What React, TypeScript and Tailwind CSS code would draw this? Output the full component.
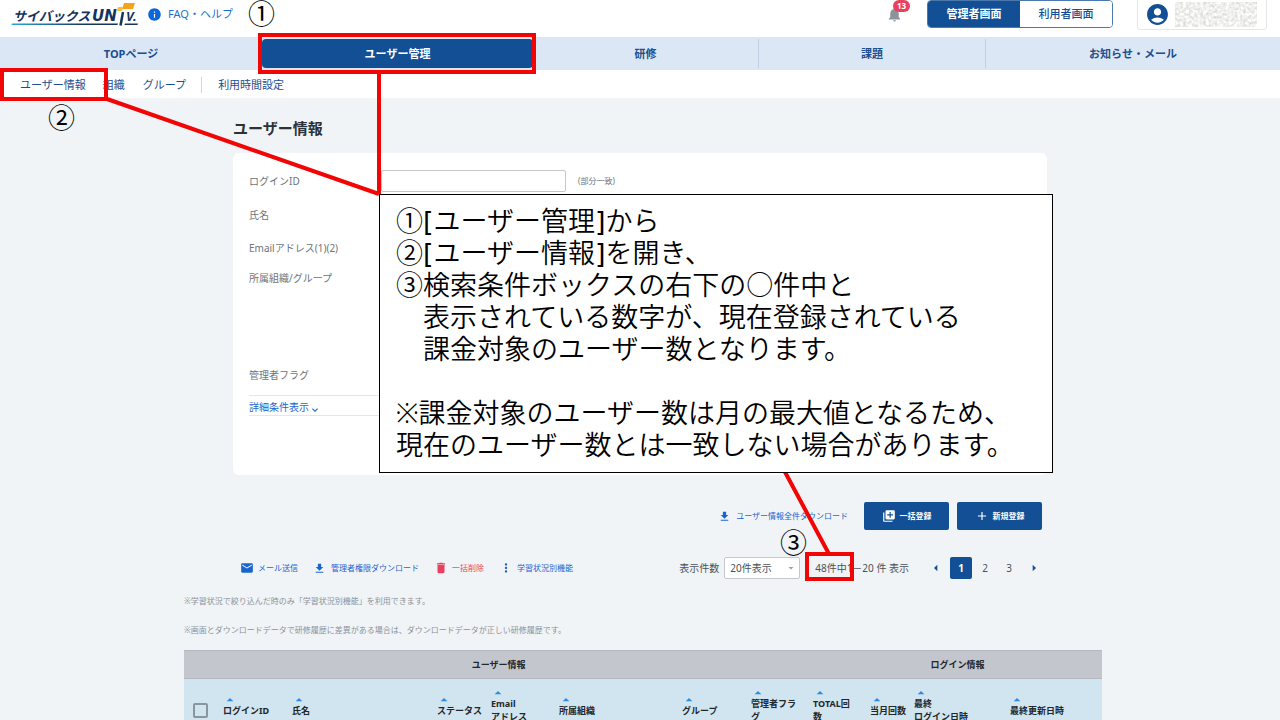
import React from "react";
import {
  MdAccountCircle,
  MdAdd,
  MdArrowDropDown,
  MdArrowDropUp,
  MdArrowLeft,
  MdArrowRight,
  MdDelete,
  MdDownload,
  MdExpandMore,
  MdInfo,
  MdLibraryAdd,
  MdMail,
  MdMoreVert,
  MdNotifications,
} from "react-icons/md";

const navItems = ["TOPページ", "ユーザー管理", "研修", "課題", "お知らせ・メール"];

const columns = [
  { label: "ログインID", width: "w-[69px]" },
  { label: "氏名", width: "w-[145px]" },
  { label: "ステータス", width: "w-[54px]" },
  { label: "Email\nアドレス", width: "w-[68px]" },
  { label: "所属組織", width: "w-[123px]" },
  { label: "グループ", width: "w-[69px]" },
  { label: "管理者フラ\nグ", width: "w-[62px]" },
  { label: "TOTAL回\n数", width: "w-[57px]" },
  { label: "当月回数", width: "w-[44px]" },
  { label: "最終\nログイン日時", width: "w-[96px]" },
  { label: "最終更新日時", width: "w-[92px]" },
];

function Logo() {
  return (
    <svg width="128" height="28" viewBox="0 0 128 28" role="img" aria-label="サイバックスUNiV.">
      <defs>
        <linearGradient id="logo-line" x1="0" x2="1" y1="0" y2="0">
          <stop offset="0" stopColor="#2aa5e0" />
          <stop offset="0.7" stopColor="#17325f" />
        </linearGradient>
      </defs>
      <path d="M1 23.5H107L106.5 25H0.5Z" fill="url(#logo-line)" />
      <path d="M114 23.5H127L126.5 25H113.5Z" fill="#17325f" />
      <g fontWeight="700" fontStyle="italic" fill="#17325f">
        <text x="2" y="21" fontSize="13">サイバックス</text>
        <text x="81" y="21" fontSize="15" fontFamily="DejaVu Sans, sans-serif">UN</text>
        <text x="115" y="21" fontSize="13">V.</text>
      </g>
      <path d="M112 12L109.5 25.5" stroke="#17325f" strokeWidth="2.5" />
      <path d="M113 3H124L122 9H111Z" fill="#f6a21b" />
      <path d="M107 7H112L111 11H106Z" fill="#f8bd3a" />
    </svg>
  );
}

function Header() {
  return (
    <header className="flex h-[37px] items-start justify-between bg-white">
      <div className="flex items-center pl-[11px]">
        <Logo />
        <a href="#faq" className="ml-2 flex items-center gap-1.5 text-[11px] text-[#1a6fd6]">
          <MdInfo className="size-[15px] text-[#0d66d8]" />
          FAQ・ヘルプ
        </a>
      </div>

      <div className="flex items-start pr-[13px]">
        <button type="button" aria-label="お知らせ" className="relative mt-1.5 mr-6">
          <MdNotifications className="size-[17px] text-[#8d939a]" />
          <span className="absolute -top-1.5 left-[7px] flex h-3 w-[17px] items-center justify-center rounded-full bg-[#e9405f] text-[8px] font-bold text-white">
            13
          </span>
        </button>
        <div className="mr-6 flex h-7 w-[186px] overflow-hidden rounded-sm border border-[#4b78ad] text-[11px]">
          <button type="button" className="flex-1 bg-[#134f94] font-bold text-white">
            管理者画面
          </button>
          <button type="button" className="flex-1 bg-white font-medium text-[#134f94]">
            利用者画面
          </button>
        </div>
        <button
          type="button"
          aria-label="アカウント"
          className="flex h-[30px] w-[130px] items-center gap-[5px] rounded-b border border-t-0 border-gray-200 pl-[7px]"
        >
          <MdAccountCircle className="size-[25px] text-[#134f94]" />
          <svg className="h-[25px] w-[82px]">
            <filter id="mosaic">
              <feTurbulence type="fractalNoise" baseFrequency="0.35" numOctaves="2" seed="4" />
              <feColorMatrix values="0.6 0 0 0 0.57 0.6 0 0 0 0.57 0.6 0 0 0 0.56 0 0 0 0 1" />
            </filter>
            <rect width="82" height="25" filter="url(#mosaic)" />
          </svg>
        </button>
      </div>
    </header>
  );
}

function Navigation() {
  return (
    <>
      <nav className="grid h-[33px] grid-cols-[262fr_271fr_226fr_227fr_294fr] bg-[#dce7f5] py-0.5 text-[11px] font-bold text-[#1b4f8f]">
        {navItems.map((item, i) => (
          <a
            key={item}
            href="#nav"
            className={
              i === 1
                ? "flex items-center justify-center rounded-sm bg-[#134f94] pt-0.5 text-white"
                : i === 2 || i === 3
                  ? "flex items-center justify-center border-r border-[#c0cfe2] pt-0.5"
                  : "flex items-center justify-center pt-0.5"
            }
          >
            {item}
          </a>
        ))}
      </nav>
      <nav className="flex h-[29px] items-center border-b border-gray-100 bg-white pt-0.5 pl-5 text-[11px] text-[#1b4f8f]">
        <a href="#users" className="mr-[17px]">ユーザー情報</a>
        <a href="#org" className="mr-[18px]">組織</a>
        <a href="#group" className="mr-[15px]">グループ</a>
        <a href="#time" className="border-l border-gray-300 pl-4">利用時間設定</a>
      </nav>
    </>
  );
}

function SearchForm() {
  return (
    <form className="mt-[15px] h-[322px] rounded-md bg-white px-4 pt-[17px] text-[10px] text-[#6d747c]">
      <div className="flex h-[22px] items-center">
        <label htmlFor="login-id" className="w-[132px]">ログインID</label>
        <input id="login-id" className="h-[22px] w-[185px] rounded-xs border border-[#c4c7cc] bg-white px-2" />
        <span className="ml-3 text-[8px]">(部分一致)</span>
      </div>
      <div className="mt-3 flex h-[22px] items-center">氏名</div>
      <div className="mt-[11px] flex h-[22px] items-center">Emailアドレス(1)(2)</div>
      <div className="mt-2 flex h-[22px] items-center">所属組織/グループ</div>
      <div className="mt-[75px] flex h-[22px] items-center">管理者フラグ</div>
      <div className="mt-[9px] flex h-[21px] items-center border-y border-[#e4e6e9]">
        <button type="button" className="flex items-center pt-1 text-[#1a64cf]">
          詳細条件表示
          <MdExpandMore className="mt-1 size-3" />
        </button>
      </div>
    </form>
  );
}

function UserActions() {
  return (
    <div className="mr-[5px] mt-[27px] flex h-7 items-center justify-end text-[8px]">
      <a href="#download" className="mr-4 flex items-center gap-[5px] text-[#1a64cf]">
        <MdDownload className="size-[13px]" />
        ユーザー情報全件ダウンロード
      </a>
      <button
        type="button"
        className="mr-2 flex h-7 w-[85px] items-center justify-center gap-1 rounded-xs bg-[#134f94] font-bold text-white"
      >
        <MdLibraryAdd className="size-[14px]" />
        一括登録
      </button>
      <button
        type="button"
        className="flex h-7 w-[85px] items-center justify-center gap-1 rounded-xs bg-[#134f94] font-bold text-white"
      >
        <MdAdd className="size-[14px]" />
        新規登録
      </button>
    </div>
  );
}

function ListToolbar() {
  return (
    <div className="mt-[26px] ml-[7px] flex h-6 items-center text-[8px] text-[#1a64cf]">
      <button type="button" className="mr-[15px] flex items-center gap-1">
        <MdMail className="size-[14px]" />
        メール送信
      </button>
      <button type="button" className="mr-[15px] flex items-center gap-[5px]">
        <MdDownload className="size-[13px]" />
        管理者権限ダウンロード
      </button>
      <button type="button" className="mr-[15px] flex items-center gap-1 text-[#e9405f]">
        <MdDelete className="size-[14px]" />
        一括削除
      </button>
      <button type="button" className="flex items-center gap-1">
        <MdMoreVert className="size-[14px]" />
        学習状況別機能
      </button>

      <div className="mr-[5px] ml-auto flex items-center text-[10px] text-[#4a5158]">
        <label htmlFor="page-size" className="mr-[5px]">表示件数</label>
        <div className="relative mr-[15px]">
          <select
            id="page-size"
            className="h-[22px] w-[76px] appearance-none rounded-xs border border-[#c4c7cc] bg-white pl-[5px]"
          >
            <option>20件表示</option>
          </select>
          <MdArrowDropDown className="pointer-events-none absolute top-[5px] right-[3px] size-3 text-gray-400" />
        </div>
        <span>48件中1－20 件 表示</span>
        <button type="button" aria-label="前へ" className="ml-[19px]">
          <MdArrowLeft className="size-4 text-[#134f94]" />
        </button>
        <button type="button" className="ml-1.5 size-[22px] rounded-xs bg-[#134f94] font-bold text-white">1</button>
        <button type="button" className="ml-0.5 size-[22px]">2</button>
        <button type="button" className="ml-0.5 size-[22px]">3</button>
        <button type="button" aria-label="次へ" className="ml-1.5">
          <MdArrowRight className="size-4 text-[#134f94]" />
        </button>
      </div>
    </div>
  );
}

function UserTable() {
  return (
    <table className="mt-[13px] w-full table-fixed text-left text-[9px] leading-[13px] text-[#23272b]">
      <colgroup>
        <col className="w-[39px]" />
        {columns.map((column) => (
          <col key={column.label} className={column.width} />
        ))}
      </colgroup>
      <thead>
        <tr className="h-7 border-y border-[#b5b9bf] bg-[#c4c6ce]">
          <th colSpan={8} className="text-center">ユーザー情報</th>
          <th colSpan={4} className="text-center">ログイン情報</th>
        </tr>
        <tr className="h-[55px] bg-[#d1e5f0]">
          <th className="pt-2 pl-[9px]">
            <input
              type="checkbox"
              aria-label="すべて選択"
              className="block size-[15px] appearance-none rounded-xs border-2 border-[#8b959e]"
            />
          </th>
          {columns.map((column) => (
            <th key={column.label} className="whitespace-pre">
              <MdArrowDropUp className="ml-px size-3 h-2 text-[#2b8be0]" viewBox="5 6 14 12" />
              {column.label}
            </th>
          ))}
        </tr>
      </thead>
    </table>
  );
}

function Bracketed({ children }: { children: React.ReactNode }) {
  return (
    <>
      <span className="font-['DejaVu_Sans',sans-serif] leading-none font-normal">[</span>
      {children}
      <span className="font-['DejaVu_Sans',sans-serif] leading-none font-normal">]</span>
    </>
  );
}

function Guide() {
  return (
    <>
      <svg className="pointer-events-none absolute top-0 left-0" width="1280" height="720" fill="none">
        <g stroke="#f20505" strokeWidth="4">
          <rect x="260" y="35" width="274" height="37" />
          <rect x="2" y="70" width="104" height="29" />
          <rect x="807" y="554" width="45" height="25" />
          <path d="M379 72V194M107 99L379 194M785 472L829 554" />
        </g>
      </svg>
      <span className="absolute top-0 left-[248px] text-[27px] leading-[27px] text-black">①</span>
      <span className="absolute top-[104px] left-[48px] text-[27px] leading-[27px] text-black">②</span>
      <span className="absolute top-[529px] left-[780px] text-[27px] leading-[27px] text-black">③</span>
      <div className="absolute top-[194px] left-[379px] h-[279px] w-[674px] border border-black bg-white px-4 pt-[10px] text-[27px] leading-8 font-[350] text-black">
        <p>①<Bracketed>ユーザー管理</Bracketed>から</p>
        <p>②<Bracketed>ユーザー情報</Bracketed>を開き、</p>
        <p>③検索条件ボックスの右下の○件中と</p>
        <p className="pl-[27px]">表示されている数字が、現在登録されている</p>
        <p className="pl-[27px]">課金対象のユーザー数となります。</p>
        <p className="mt-8">※課金対象のユーザー数は月の最大値となるため、</p>
        <p>現在のユーザー数とは一致しない場合があります。</p>
      </div>
    </>
  );
}

export default function App() {
  return (
    <div className="relative h-screen overflow-hidden bg-[#f1f4f7] font-['Noto_Sans','Noto_Sans_CJK_JP',sans-serif]">
      <Header />
      <Navigation />
      <main className="pt-[19px]">
        <div className="mx-auto max-w-[814px]">
          <h1 className="text-[15px] leading-5 font-bold text-[#2c3238]">ユーザー情報</h1>
          <SearchForm />
          <UserActions />
          <ListToolbar />
        </div>
        <div className="pl-1.5">
          <div className="mx-auto max-w-[918px]">
            <p className="mt-[14px] text-[8px] leading-[14px] text-[#8b9299]">
              ※学習状況で絞り込んだ時のみ「学習状況別機能」を利用できます。
            </p>
            <p className="mt-[15px] text-[8px] leading-[14px] text-[#8b9299]">
              ※画面とダウンロードデータで研修履歴に差異がある場合は、ダウンロードデータが正しい研修履歴です。
            </p>
            <UserTable />
          </div>
        </div>
      </main>
      <Guide />
    </div>
  );
}
